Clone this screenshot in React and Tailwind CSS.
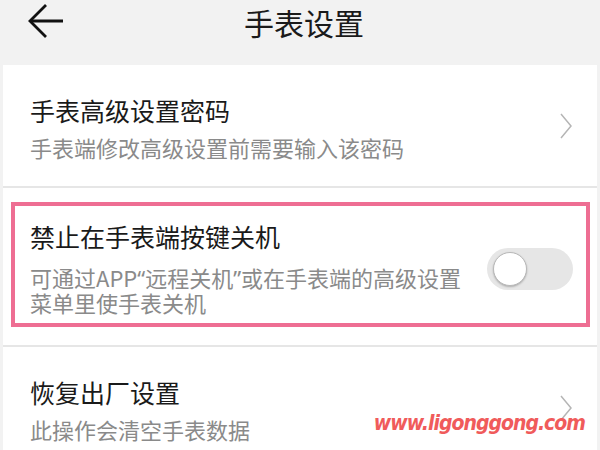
const Chevron = () => (
  <svg width="14" height="26" viewBox="0 0 14 26" className="shrink-0">
    <polyline points="2,1 12,13 2,25" fill="none" stroke="#b5b5b5" strokeWidth="1.5" />
  </svg>
);

// narrow latin quotes like the phone font
const Q = ({ children }) => <span style={{ fontFamily: '"Noto Sans", sans-serif' }}>{children}</span>;

const App = () => {
  return (
    <div
      className="relative w-[600px] h-[450px] overflow-hidden bg-[#f2f2f2]"
      style={{ fontFamily: '"Noto Sans CJK SC", "Noto Sans", sans-serif' }}
    >
      {/* header */}
      <div className="grid grid-cols-[1fr_auto_1fr] items-start h-[65px]">
        <div className="pl-[28px] pt-[3px]">
          <svg width="36" height="36" viewBox="0 0 36 36">
            <polyline points="18,2 2,18 18,34" fill="none" stroke="#111" strokeWidth="2.8" />
            <line x1="2" y1="18" x2="35" y2="18" stroke="#111" strokeWidth="2.8" />
          </svg>
        </div>
        <div className="text-[30px] leading-[30px] text-[#1a1a1a] pl-[8px] pt-[7px]">手表设置</div>
        <div />
      </div>

      <div className="px-[3px]">
        {/* row 1 */}
        <div className="flex items-center h-[123px] bg-white border-b-2 border-[#e6e6e6] pl-[27px] pr-[24px]">
          <div className="flex-1 pt-[4px]">
            <div className="text-[25px] leading-[34px] text-[#1a1a1a]">手表高级设置密码</div>
            <div className="text-[22px] leading-[32px] text-[#8a8a8a] mt-[4px]">手表端修改高级设置前需要输入该密码</div>
          </div>
          <Chevron />
        </div>

        {/* row 2 */}
        <div className="bg-white border-b-2 border-[#e6e6e6] pt-[14px] pb-[18px] pl-[8px] pr-[7px]">
          <div className="flex items-center h-[125px] border-4 border-[#ee6e93] pl-[15px] pr-[13px]">
            <div className="flex-1 self-start pt-[13px]">
              <div className="text-[25px] leading-[34px] text-[#1a1a1a]">禁止在手表端按键关机</div>
              <div className="text-[22px] leading-[24px] text-[#8a8a8a] mt-[12px]">
                可通过APP<Q>“</Q>远程关机<Q>”</Q>或在手表端的高级设置
                <br />
                菜单里使手表关机
              </div>
            </div>
            <div className="relative w-[86px] h-[42px] rounded-full bg-[#e6e6e6] shrink-0 mt-[8px]">
              <div className="absolute left-[6px] top-[4px] w-[34px] h-[34px] rounded-full bg-white border-[1.5px] border-[#b8b8b8] shadow-[0_1px_2px_rgba(0,0,0,0.25)]" />
            </div>
          </div>
        </div>

        {/* row 3 */}
        <div className="flex items-center h-[122px] bg-white pl-[27px] pr-[24px]">
          <div className="flex-1 pt-[4px]">
            <div className="text-[25px] leading-[34px] text-[#1a1a1a]">恢复出厂设置</div>
            <div className="text-[22px] leading-[32px] text-[#8a8a8a] mt-[4px]">此操作会清空手表数据</div>
          </div>
          <Chevron />
        </div>
      </div>

      {/* watermark */}
      <div
        className="absolute right-[15px] top-[413px] text-[21px] font-bold italic leading-none text-[#f05b5b] tracking-[-1px]"
        style={{ fontFamily: '"DejaVu Sans Condensed", "DejaVu Sans", sans-serif' }}
      >
        www.ligonggong.com
      </div>
    </div>
  );
};

export default App;
